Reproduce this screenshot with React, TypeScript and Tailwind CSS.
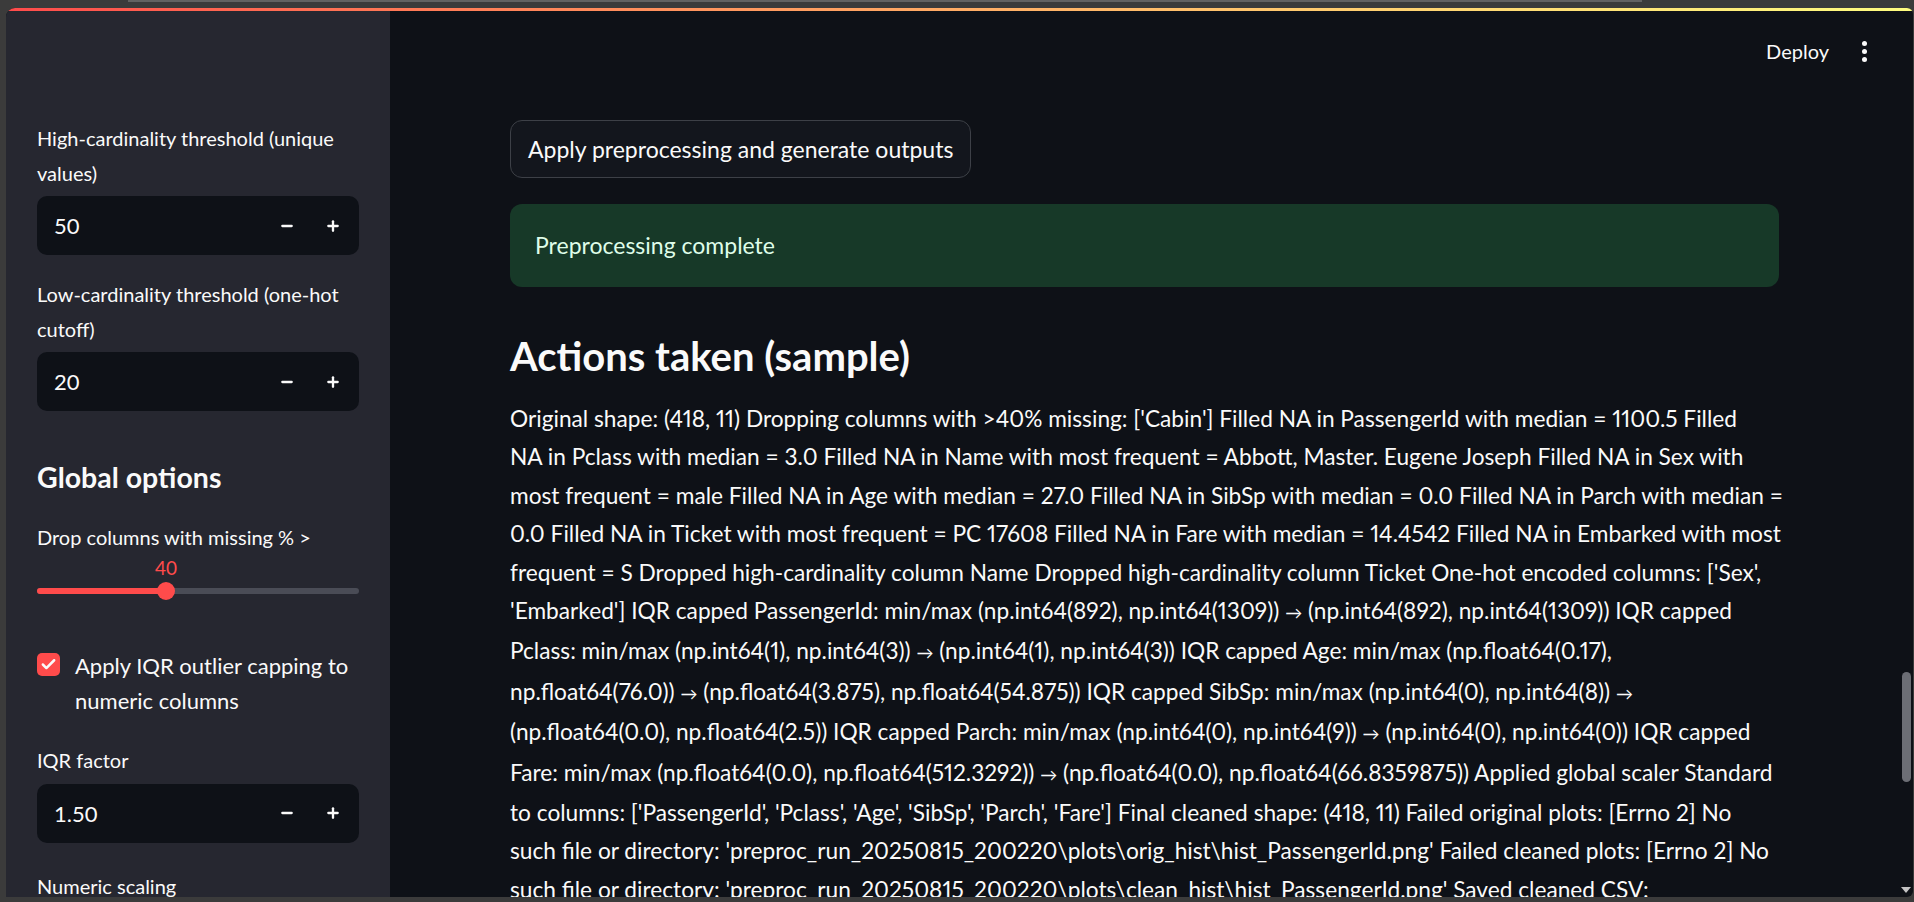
import { Fragment } from 'react'
import { Check, Minus, Plus } from 'lucide-react'

// the log lines, broken where the app wraps them
const actionLines = [
  "Original shape: (418, 11) Dropping columns with >40% missing: ['Cabin'] Filled NA in PassengerId with median = 1100.5 Filled",
  "NA in Pclass with median = 3.0 Filled NA in Name with most frequent = Abbott, Master. Eugene Joseph Filled NA in Sex with",
  "most frequent = male Filled NA in Age with median = 27.0 Filled NA in SibSp with median = 0.0 Filled NA in Parch with median =",
  "0.0 Filled NA in Ticket with most frequent = PC 17608 Filled NA in Fare with median = 14.4542 Filled NA in Embarked with most",
  "frequent = S Dropped high-cardinality column Name Dropped high-cardinality column Ticket One-hot encoded columns: ['Sex',",
  "'Embarked'] IQR capped PassengerId: min/max (np.int64(892), np.int64(1309)) → (np.int64(892), np.int64(1309)) IQR capped",
  "Pclass: min/max (np.int64(1), np.int64(3)) → (np.int64(1), np.int64(3)) IQR capped Age: min/max (np.float64(0.17),",
  "np.float64(76.0)) → (np.float64(3.875), np.float64(54.875)) IQR capped SibSp: min/max (np.int64(0), np.int64(8)) →",
  "(np.float64(0.0), np.float64(2.5)) IQR capped Parch: min/max (np.int64(0), np.int64(9)) → (np.int64(0), np.int64(0)) IQR capped",
  "Fare: min/max (np.float64(0.0), np.float64(512.3292)) → (np.float64(0.0), np.float64(66.8359875)) Applied global scaler Standard",
  "to columns: ['PassengerId', 'Pclass', 'Age', 'SibSp', 'Parch', 'Fare'] Final cleaned shape: (418, 11) Failed original plots: [Errno 2] No",
  "such file or directory: 'preproc_run_20250815_200220\\plots\\orig_hist\\hist_PassengerId.png' Failed cleaned plots: [Errno 2] No",
  "such file or directory: 'preproc_run_20250815_200220\\plots\\clean_hist\\hist_PassengerId.png' Saved cleaned CSV:",
  "preproc_run_20250815_200220\\cleaned_dataset.csv Saved report: preproc_run_20250815_200220\\report.json",
]

function NumberInput({ value }: { value: string }) {
  return (
    <div className="flex h-[59px] items-center rounded-[10px] bg-[#0e1117]">
      <span className="flex-1 pl-[17px] text-[22px] text-[#fafafa]">{value}</span>
      <button className="flex h-full w-[46px] items-center justify-center text-[#fafafa]">
        <Minus size={16} strokeWidth={3.5} />
      </button>
      <button className="mr-[3px] flex h-full w-[46px] items-center justify-center text-[#fafafa]">
        <Plus size={16} strokeWidth={3.5} />
      </button>
    </div>
  )
}

function Label({ children }: { children: React.ReactNode }) {
  return <p className="mb-[6px] text-[20px] leading-[34.5px] text-[#fafafa]">{children}</p>
}

function LogLine({ text }: { text: string }) {
  const parts = text.split('→')
  return (
    <>
      {parts.map((part, i) => (
        <Fragment key={i}>
          {part}
          {i < parts.length - 1 && <span className="text-[17px]">→</span>}
        </Fragment>
      ))}
    </>
  )
}

export default function App() {
  return (
    <div className="flex h-[902px] w-full flex-col overflow-hidden bg-[#3b3b3b] font-['Lato',sans-serif]">
      {/* browser chrome strip */}
      <div className="h-[8px] shrink-0">
        <div className="ml-[128px] h-[2px] w-[1514px] bg-[#626262]" />
      </div>

      <div className="ml-[6px] mr-[1px] flex min-h-0 flex-1 flex-col overflow-hidden rounded-tl-[9px] rounded-tr-[6px] rounded-br-[6px] bg-[#0e1117]">
        <div className="h-[3px] shrink-0 bg-gradient-to-r from-[#ff4b4b] to-[#fffd80]" />

        <div className="flex min-h-0 flex-1">
          {/* sidebar */}
          <aside className="w-[384px] shrink-0 bg-[#262730] px-[31px] pt-[110px]">
            <Label>High-cardinality threshold (unique values)</Label>
            <NumberInput value="50" />

            <div className="mt-[22px]">
              <Label>Low-cardinality threshold (one-hot cutoff)</Label>
              <NumberInput value="20" />
            </div>

            <h3 className="mt-[50px] text-[28.5px] font-bold leading-[32px] text-[#fafafa]">Global options</h3>

            <p className="mt-[27px] text-[20px] leading-[34px] text-[#fafafa]">Drop columns with missing % &gt;</p>
            <div className="relative h-[62px]">
              <span className="absolute left-[129px] top-[0px] w-[0px] text-[19px] text-[#ff4b4b]">
                <span className="absolute -translate-x-1/2">40</span>
              </span>
              <div className="absolute left-0 right-0 top-[34px] h-[6px] rounded-full bg-[#4a4c56]">
                <div className="h-full w-[129px] rounded-full bg-[#ff4b4b]" />
              </div>
              <div className="absolute left-[120px] top-[28px] h-[18px] w-[18px] rounded-full bg-[#ff4b4b]" />
            </div>

            <div className="mt-[32px] flex items-start gap-[15px]">
              <div className="mt-[5px] flex h-[23px] w-[23px] shrink-0 items-center justify-center rounded-[5px] bg-[#ff4b4b]">
                <Check size={17} strokeWidth={3.5} className="text-[#fafafa]" />
              </div>
              <p className="-mr-[4px] text-[22px] leading-[35px] text-[#fafafa]">Apply IQR outlier capping to numeric columns</p>
            </div>

            <div className="mt-[25px]">
              <Label>IQR factor</Label>
              <NumberInput value="1.50" />
            </div>

            <p className="mt-[26px] text-[20px] leading-[34px] text-[#fafafa]">Numeric scaling</p>
          </aside>

          {/* main */}
          <main className="flex min-w-0 flex-1">
            <div className="min-w-0 flex-1">
              <header className="flex h-[80px] items-center justify-end gap-[33px] pr-[32px]">
                <span className="text-[20px] text-[#fafafa]">Deploy</span>
                <span className="flex flex-col gap-[3px]">
                  <span className="h-[5px] w-[5px] rounded-full bg-[#fafafa]" />
                  <span className="h-[5px] w-[5px] rounded-full bg-[#fafafa]" />
                  <span className="h-[5px] w-[5px] rounded-full bg-[#fafafa]" />
                </span>
              </header>

              <div className="pl-[120px] pr-[120px] pt-[29px]">
                <button className="h-[58px] rounded-[12px] border border-[#3d4047] bg-[#13161d] px-[17px] text-[23px] text-[#fafafa]">
                  Apply preprocessing and generate outputs
                </button>

                <div className="mt-[26px] flex h-[83px] items-center rounded-[12px] bg-[#173928] px-[25px] text-[23px] text-[#dffde9]">
                  Preprocessing complete
                </div>

                <h3 className="mt-[45px] text-[40px] font-bold leading-[48px] text-[#fafafa]">Actions taken (sample)</h3>

                <p className="mt-[20px] whitespace-nowrap text-[22.7px] leading-[38.4px] text-[#fafafa] proportional-nums">
                  {actionLines.map((line, i) => (
                    <Fragment key={i}>
                      <LogLine text={line} />
                      {i < actionLines.length - 1 && <br />}
                    </Fragment>
                  ))}
                </p>
              </div>
            </div>

            {/* scrollbar */}
            <div className="flex w-[14px] shrink-0 flex-col items-center">
              <div className="mt-[661px] h-[110px] w-[9px] rounded-full bg-[#6c6e75]" />
              <div className="flex-1" />
              <div className="mb-[4px] h-0 w-0 border-x-[5px] border-t-[6px] border-x-transparent border-t-[#c4c4c4]" />
            </div>
          </main>
        </div>
      </div>
      <div className="h-[5px] shrink-0" />
    </div>
  )
}
